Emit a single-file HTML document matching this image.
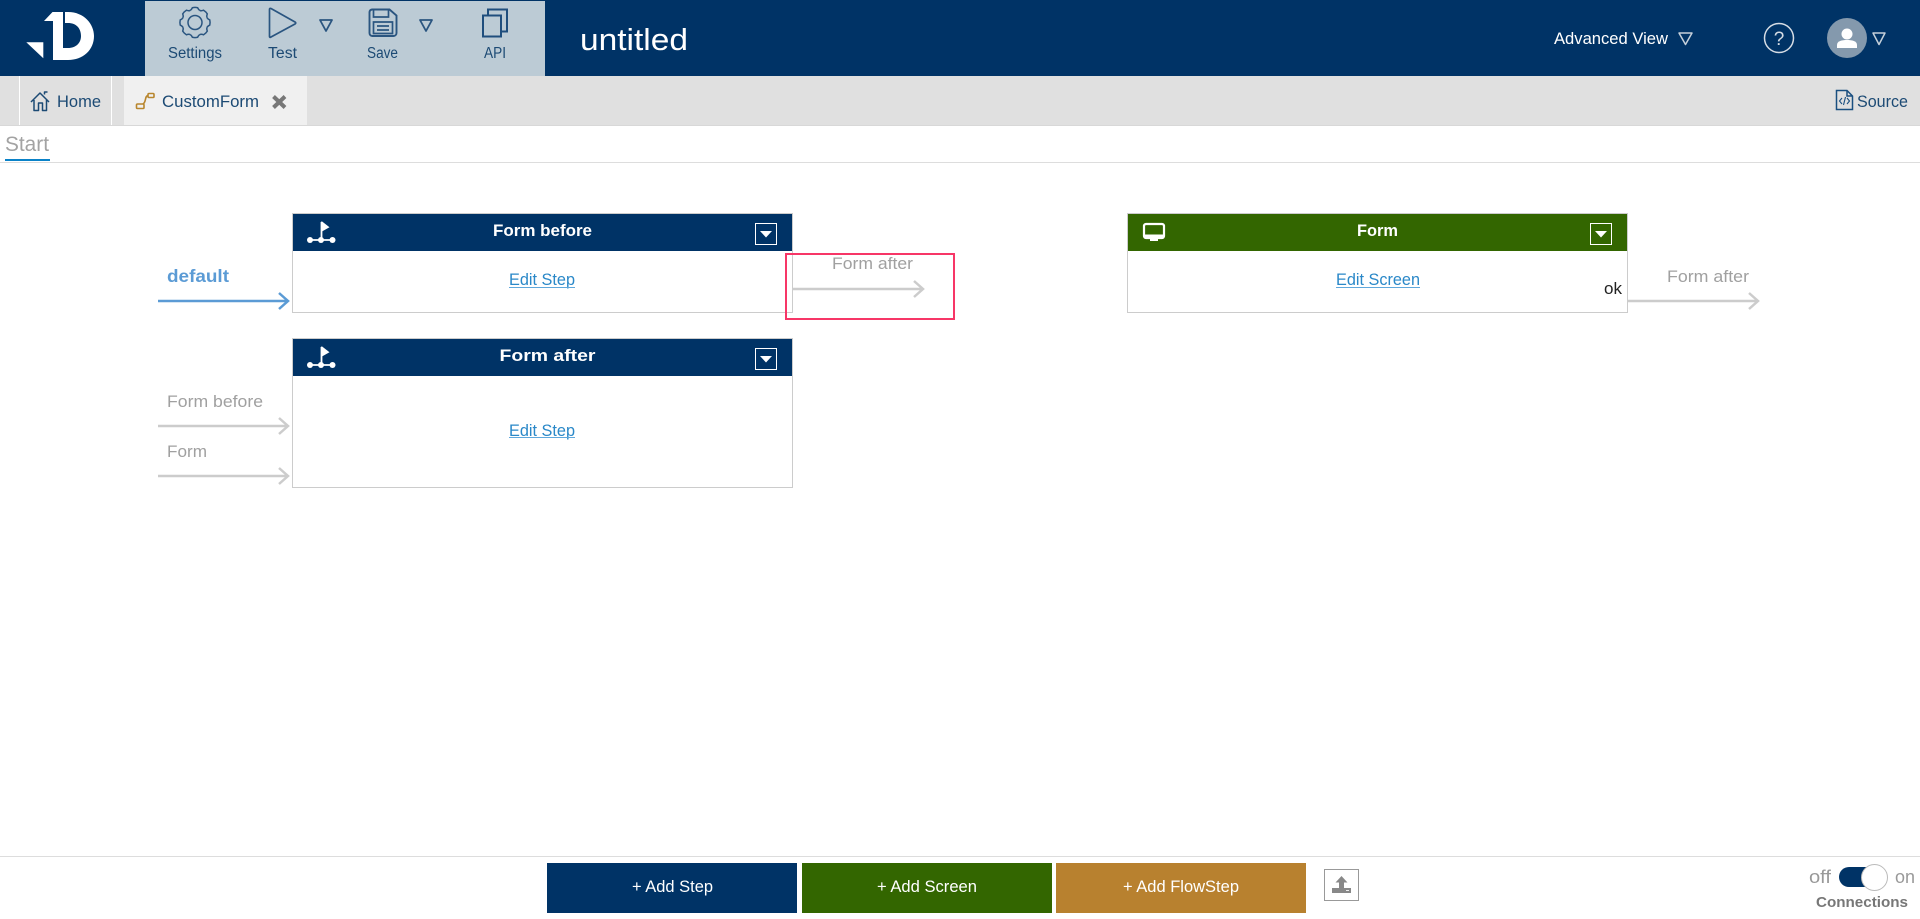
<!DOCTYPE html>
<html lang="en">
<head>
<meta charset="utf-8">
<title>untitled</title>
<style>
html,body{margin:0;padding:0;background:#fff;width:1920px;height:919px;overflow:hidden}
svg{display:block;position:absolute;left:0;top:0}
text{font-family:"Liberation Sans",Arial,sans-serif;white-space:pre}
.tb{font-size:15.5px;fill:#1c4a74}
.h{font-size:16.5px;font-weight:bold;fill:#fff}
.lnk{font-size:16.5px;fill:#2a88c8}
.lab{font-size:17px;fill:#a0a0a0}
.btn{font-size:17px;fill:#fff}
.ic{fill:none;stroke:#2a5580;stroke-width:1.7}
</style>
</head>
<body>
<svg width="1920" height="919" viewBox="0 0 1920 919" xmlns="http://www.w3.org/2000/svg">
<defs>
<path id="tooth" d="M-4.97-12Q-3.6-12.6-2.6-14.77Q0-15.4 2.6-14.77Q3.6-12.6 4.97-12" fill="none" stroke="#2a5580" stroke-width="1.5"/>
</defs>
<rect width="1920" height="919" fill="#fff"/>

<!-- header -->
<rect width="1920" height="76" fill="#003366"/>
<rect x="145" y="1" width="400" height="75" fill="#bccbd5"/>

<!-- logo -->
<path d="M26.3 42.3H43.3V58.3Z" fill="#fff"/>
<path fill="#fff" d="M44 21L52.5 12H63V48H68C76 48 81 43 81 36C81 28 76 23 68 23H65V12H68C84 12 94 24 94 36C94 50 83 60 68 60H53V21Z"/>

<!-- toolbar icons -->
<g transform="translate(195 22.500)">
<use href="#tooth"/><use href="#tooth" transform="rotate(45)"/><use href="#tooth" transform="rotate(90)"/><use href="#tooth" transform="rotate(135)"/><use href="#tooth" transform="rotate(180)"/><use href="#tooth" transform="rotate(225)"/><use href="#tooth" transform="rotate(270)"/><use href="#tooth" transform="rotate(315)"/>
<circle r="7" fill="none" stroke="#2a5580" stroke-width="1.5"/>
</g>
<path class="ic" stroke-linejoin="round" d="M269.500 9.500V36.500Q269.500 38 271 37L295 24Q296.500 23 295 22L271 8.500Q269.500 8 269.500 9.500Z"/>
<path fill="none" stroke="#2a5580" stroke-width="1.8" stroke-linejoin="round" d="M320 20H332L326 31Z"/>
<path fill="none" stroke="#2a5580" stroke-width="1.9" d="M372 9.500H389.500L396.500 15.500V33A3 3 0 0 1 393.500 36H372A3 3 0 0 1 369.500 33V12A3 3 0 0 1 372 9.500Z"/>
<path class="ic" d="M373.500 9.500V17H388.500V10"/>
<path class="ic" d="M373.500 22H392.500V33.500H373.500ZM377 26H389M377 30H389"/>
<path fill="none" stroke="#2a5580" stroke-width="1.8" stroke-linejoin="round" d="M420 20H432L426 31Z"/>
<path fill="none" stroke="#1f4e7d" stroke-width="2" d="M483 15.500H501V36.500H483ZM488 15V9.500H507V31.500H501"/>

<text class="tb" x="168" y="58" textLength="54" lengthAdjust="spacingAndGlyphs">Settings</text>
<text class="tb" x="268" y="58" textLength="29" lengthAdjust="spacingAndGlyphs">Test</text>
<text class="tb" x="367" y="58" textLength="31" lengthAdjust="spacingAndGlyphs">Save</text>
<text class="tb" x="484" y="58" textLength="22" lengthAdjust="spacingAndGlyphs">API</text>

<text x="580" y="50" font-size="31" fill="#fff" textLength="108" lengthAdjust="spacingAndGlyphs">untitled</text>
<text x="1554" y="44" font-size="17" fill="#fff" textLength="114" lengthAdjust="spacingAndGlyphs">Advanced View</text>
<path d="M1679 33H1692L1685.500 44.500Z" fill="none" stroke="#c5d0da" stroke-width="1.5" stroke-linejoin="round"/>
<circle cx="1779" cy="38" r="14.500" fill="none" stroke="#d5dce4" stroke-width="1.5"/>
<text x="1779" y="45" font-size="19" fill="#d5dce4" text-anchor="middle">?</text>
<circle cx="1847" cy="38" r="20" fill="#8499ad"/>
<circle cx="1847" cy="34" r="5.500" fill="#fff"/>
<path d="M1837 48V45C1837 41 1842 40 1847 40S1857 41 1857 45V48Z" fill="#fff"/>
<path d="M1873 33H1885L1879 44.500Z" fill="none" stroke="#c5d0da" stroke-width="1.5" stroke-linejoin="round"/>

<!-- tab bar -->
<rect y="76" width="1920" height="49" fill="#e0e0e0"/>
<rect y="125" width="1920" height="1" fill="#d8d8d8"/>
<rect x="19" y="76" width="1" height="49" fill="#fff"/>
<rect x="111" y="76" width="1" height="49" fill="#fff"/>
<rect x="124" y="76" width="183" height="49" fill="#f0f0f0"/>
<path fill="none" stroke="#1c4a74" stroke-width="1.5" stroke-linejoin="round" d="M31 102L40 93L49 102M44.500 94.500V92H47.500M34 100V110.500H38.500V103H42.500V110.500H46.500V100"/>
<text x="57" y="107" font-size="17" fill="#1c4a74" textLength="44" lengthAdjust="spacingAndGlyphs">Home</text>
<g fill="none" stroke="#b8862e" stroke-width="1.6">
<rect x="136.500" y="104" width="7.500" height="4.500" rx="1"/>
<rect x="148" y="93.500" width="6" height="4" rx="1"/>
<path d="M143 104C146.500 102 144.500 96 148 95.500"/>
</g>
<text x="162" y="107" font-size="17" fill="#1c4a74" textLength="97" lengthAdjust="spacingAndGlyphs">CustomForm</text>
<path d="M273.500 96.500L285 107.500M285 96.500L273.500 107.500" stroke="#777" stroke-width="4" fill="none"/>
<path fill="none" stroke="#1a4f80" stroke-width="1.5" d="M1836.500 90.500H1847L1852.500 96V109.500H1836.500ZM1847 90.500V96H1852.500"/>
<path fill="none" stroke="#1a4f80" stroke-width="1.1" d="M1842 98L1839.500 101L1842 104M1847 98L1849.500 101L1847 104M1845.500 97L1843.500 105"/>
<text x="1857" y="107" font-size="17" fill="#1c4a74" textLength="51" lengthAdjust="spacingAndGlyphs">Source</text>

<!-- sub tab -->
<text x="5" y="151" font-size="21" fill="#a3a3a3" textLength="44" lengthAdjust="spacingAndGlyphs">Start</text>
<rect x="5" y="159" width="45" height="2" fill="#0a82c8"/>
<rect y="162" width="1920" height="1" fill="#ddd"/>

<!-- Box: Form before -->
<rect x="292.500" y="213.500" width="500" height="99" fill="#fff" stroke="#ccc"/>
<rect x="293" y="214" width="499" height="37" fill="#003366"/>
<g>
<path d="M310 240H333M321.500 240V222" stroke="#fff" stroke-width="1.8" fill="none"/>
<path d="M321.500 221L329.500 227.300L321.500 231.700Z" fill="#fff"/>
<circle cx="310" cy="240" r="3" fill="#fff"/><circle cx="321" cy="240" r="3" fill="#fff"/><circle cx="332.500" cy="240" r="3" fill="#fff"/>
</g>
<text class="h" x="493" y="236" textLength="99" lengthAdjust="spacingAndGlyphs">Form before</text>
<rect x="755.500" y="223.500" width="21" height="21" fill="none" stroke="#fff"/>
<path d="M760 231H772L766 237.500Z" fill="#fff"/>
<text class="lnk" x="509" y="285" textLength="66" lengthAdjust="spacingAndGlyphs">Edit Step</text>
<rect x="509" y="287" width="66" height="1" fill="#5fa8dc"/>

<!-- Box: Form after -->
<rect x="292.500" y="338.500" width="500" height="149" fill="#fff" stroke="#ccc"/>
<rect x="293" y="339" width="499" height="37" fill="#003366"/>
<g transform="translate(0 125)">
<path d="M310 240H333M321.500 240V222" stroke="#fff" stroke-width="1.8" fill="none"/>
<path d="M321.500 221L329.500 227.300L321.500 231.700Z" fill="#fff"/>
<circle cx="310" cy="240" r="3" fill="#fff"/><circle cx="321" cy="240" r="3" fill="#fff"/><circle cx="332.500" cy="240" r="3" fill="#fff"/>
</g>
<text class="h" x="499.500" y="361" textLength="96" lengthAdjust="spacingAndGlyphs">Form after</text>
<rect x="755.500" y="348.500" width="21" height="21" fill="none" stroke="#fff"/>
<path d="M760 356H772L766 362.500Z" fill="#fff"/>
<text class="lnk" x="509" y="436" textLength="66" lengthAdjust="spacingAndGlyphs">Edit Step</text>
<rect x="509" y="437" width="66" height="1" fill="#5fa8dc"/>

<!-- Box: Form screen -->
<rect x="1127.500" y="213.500" width="500" height="99" fill="#fff" stroke="#ccc"/>
<rect x="1128" y="214" width="499" height="37" fill="#336600"/>
<rect x="1144" y="224" width="20" height="14" rx="2" fill="none" stroke="#fff" stroke-width="2.200"/>
<rect x="1144" y="234.500" width="20" height="4" fill="#fff"/>
<rect x="1150" y="238" width="8" height="3" fill="#fff"/>
<text class="h" x="1357" y="236" textLength="41" lengthAdjust="spacingAndGlyphs">Form</text>
<rect x="1590.500" y="223.500" width="21" height="21" fill="none" stroke="#fff"/>
<path d="M1595 231H1607L1601 237.500Z" fill="#fff"/>
<text class="lnk" x="1336" y="285" textLength="84" lengthAdjust="spacingAndGlyphs">Edit Screen</text>
<rect x="1336" y="287" width="84" height="1" fill="#5fa8dc"/>
<text x="1604" y="294" font-size="17" fill="#222" textLength="18" lengthAdjust="spacingAndGlyphs">ok</text>

<!-- Connectors -->
<text x="167" y="282" font-size="17.500" font-weight="bold" fill="#5b9bd5" textLength="62" lengthAdjust="spacingAndGlyphs">default</text>
<path d="M158 301H287M279 293L288 301L279 309" fill="none" stroke="#5b9bd5" stroke-width="2.500"/>
<text class="lab" x="167" y="407" textLength="96" lengthAdjust="spacingAndGlyphs">Form before</text>
<path d="M158 426H287M279 418L288 426L279 434" fill="none" stroke="#ccc" stroke-width="2.500"/>
<text class="lab" x="167" y="457" textLength="40" lengthAdjust="spacingAndGlyphs">Form</text>
<path d="M158 476H287M279 468L288 476L279 484" fill="none" stroke="#ccc" stroke-width="2.500"/>
<text class="lab" x="832" y="269" textLength="81" lengthAdjust="spacingAndGlyphs">Form after</text>
<path d="M793 289H922M914 281L923 289L914 297" fill="none" stroke="#ccc" stroke-width="2.500"/>
<rect x="786" y="254" width="168" height="65" fill="none" stroke="#f73667" stroke-width="2"/>
<text class="lab" x="1667" y="282" textLength="82" lengthAdjust="spacingAndGlyphs">Form after</text>
<path d="M1628 301H1757M1749 293L1758 301L1749 309" fill="none" stroke="#ccc" stroke-width="2.500"/>

<!-- Footer -->
<rect y="856" width="1920" height="1" fill="#ddd"/>
<rect x="547" y="863" width="250" height="50" fill="#003366"/>
<text class="btn" x="632" y="892" textLength="81" lengthAdjust="spacingAndGlyphs">+ Add Step</text>
<rect x="802" y="863" width="250" height="50" fill="#336600"/>
<text class="btn" x="877" y="892" textLength="100" lengthAdjust="spacingAndGlyphs">+ Add Screen</text>
<rect x="1056" y="863" width="250" height="50" fill="#b8812f"/>
<text class="btn" x="1123" y="892" textLength="116" lengthAdjust="spacingAndGlyphs">+ Add FlowStep</text>

<rect x="1324.500" y="869.500" width="34" height="31" fill="#fff" stroke="#999"/>
<path d="M1341.500 876L1347.500 882.500H1344V889H1339V882.500H1335.500Z" fill="#888"/>
<rect x="1332" y="888" width="19" height="5" fill="#888"/>
<rect x="1346" y="890" width="3" height="1" fill="#eee"/>

<text x="1809" y="883" font-size="18" fill="#999" textLength="22" lengthAdjust="spacingAndGlyphs">off</text>
<rect x="1839" y="867" width="36" height="20" rx="10" fill="#003366"/>
<circle cx="1874.500" cy="877.500" r="13" fill="#fff" stroke="#bbb"/>
<text x="1895" y="883" font-size="18" fill="#999" textLength="20" lengthAdjust="spacingAndGlyphs">on</text>
<text x="1816" y="907" font-size="14.500" font-weight="bold" fill="#777" textLength="92" lengthAdjust="spacingAndGlyphs">Connections</text>
</svg>
</body>
</html>
